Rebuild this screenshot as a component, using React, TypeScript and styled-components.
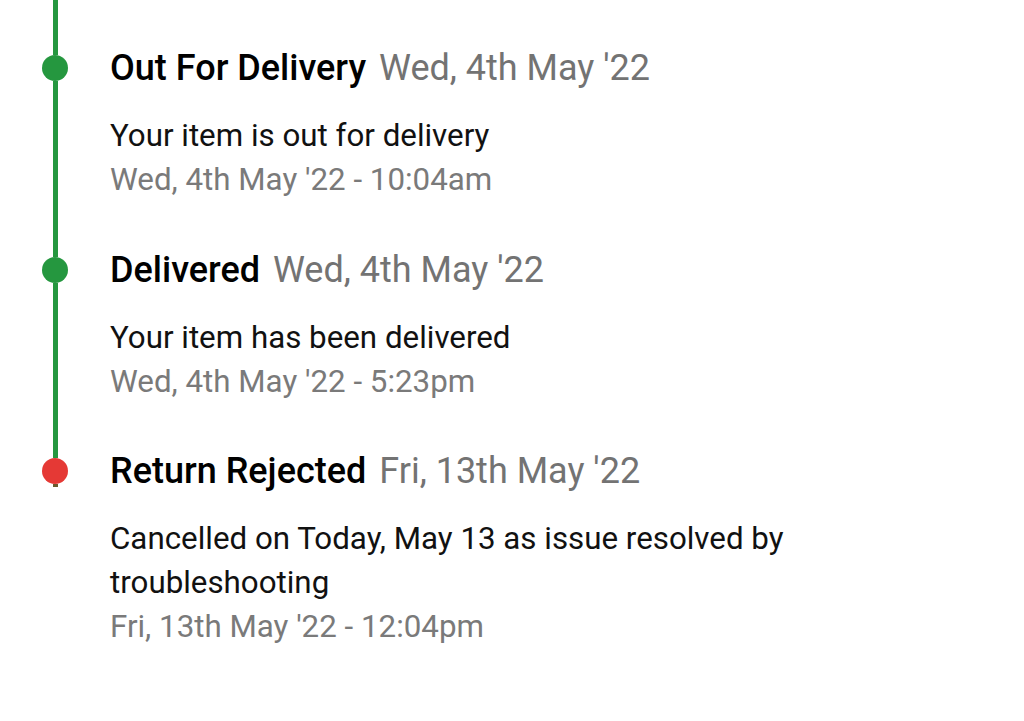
import React from "react";
import styled, { createGlobalStyle } from "styled-components";

const GlobalStyle = createGlobalStyle`
  html, body {
    margin: 0;
    padding: 0;
    background: #ffffff;
  }
  body {
    font-family: Roboto, "Noto Sans", "Liberation Sans", sans-serif;
    -webkit-font-smoothing: antialiased;
  }
`;

const Page = styled.div`
  width: 1024px;
  height: 721px;
  overflow: hidden;
  background: #ffffff;
`;

const Timeline = styled.ul`
  list-style: none;
  margin: 0;
  padding: 0;
`;

const Item = styled.li`
  display: grid;
  grid-template-columns: 110px 1fr;
`;

const Rail = styled.div`
  display: flex;
  flex-direction: column;
  align-items: center;
  width: 110px;
`;

const Segment = styled.div<{ $height?: number; $grow?: boolean; $dim?: boolean }>`
  width: 5px;
  background: ${(p) => (p.$dim ? "#6b5a2c" : "#25973f")};
  height: ${(p) => (p.$height !== undefined ? `${p.$height}px` : "auto")};
  flex: ${(p) => (p.$grow ? "1" : "none")};
`;

const Dot = styled.span<{ $color: string }>`
  width: 26px;
  height: 26px;
  border-radius: 50%;
  background: ${(p) => p.$color};
  flex: none;
`;

const Content = styled.div<{ $last?: boolean }>`
  padding-top: ${(p) => (p.$last ? "45px" : "46px")};
`;

const Title = styled.div`
  font-size: 36px;
  line-height: 44px;
  color: #000000;
  font-weight: 500;
  white-space: nowrap;
`;

const TitleDate = styled.span`
  font-weight: 400;
  color: #737373;
  margin-left: 4px;
`;

const Message = styled.p`
  margin: 24px 0 0;
  font-size: 31.3px;
  line-height: 44px;
  color: #111111;
  max-width: 700px;
`;

const Stamp = styled.div`
  font-size: 31.3px;
  line-height: 44px;
  color: #7a7a7a;
`;

interface IEvent {
  id: string;
  title: string;
  date: string;
  message: string;
  stamp: string;
  color: string;
}

const events: IEvent[] = [
  {
    id: "out",
    title: "Out For Delivery",
    date: "Wed, 4th May '22",
    message: "Your item is out for delivery",
    stamp: "Wed, 4th May '22 - 10:04am",
    color: "#25973f",
  },
  {
    id: "delivered",
    title: "Delivered",
    date: "Wed, 4th May '22",
    message: "Your item has been delivered",
    stamp: "Wed, 4th May '22 - 5:23pm",
    color: "#25973f",
  },
  {
    id: "rejected",
    title: "Return Rejected",
    date: "Fri, 13th May '22",
    message: "Cancelled on Today, May 13 as issue resolved by troubleshooting",
    stamp: "Fri, 13th May '22 - 12:04pm",
    color: "#e53935",
  },
];

const App = () => {
  return (
    <Page>
      <GlobalStyle />
      <Timeline>
        {events.map((ev, i) => {
          const last = i === events.length - 1;
          return (
            <Item key={ev.id}>
              <Rail>
                <Segment $height={last ? 54 : 55} />
                <Dot $color={ev.color} />
                {last ? <Segment $height={3} $dim /> : <Segment $grow />}
              </Rail>
              <Content $last={last}>
                <Title>
                  {ev.title}{" "}
                  <TitleDate>{ev.date}</TitleDate>
                </Title>
                <Message>{ev.message}</Message>
                <Stamp>{ev.stamp}</Stamp>
              </Content>
            </Item>
          );
        })}
      </Timeline>
    </Page>
  );
};

export default App;
